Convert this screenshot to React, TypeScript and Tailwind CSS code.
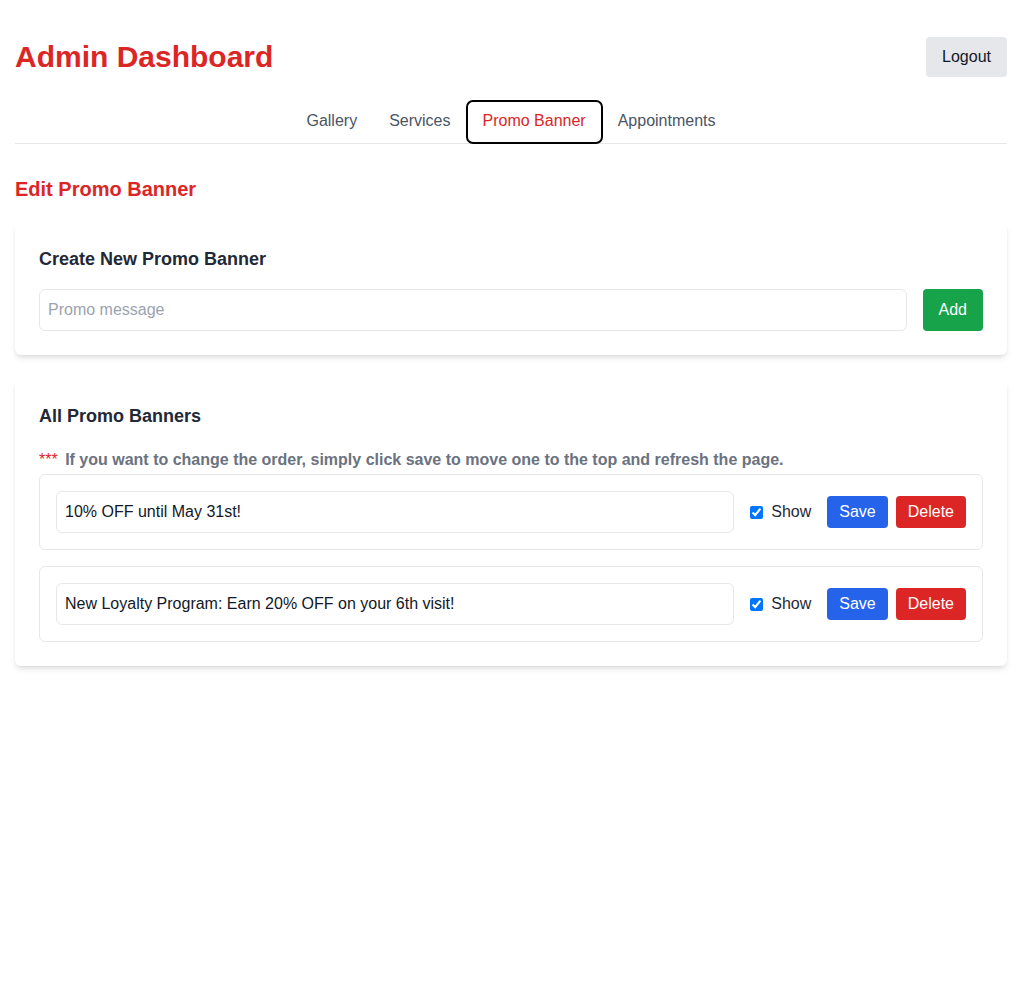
import { useState } from 'react'

// ── Data ───────────────────────────
interface PromoBanner {
    id: number
    message: string
    show: boolean
}

const INITIAL_BANNERS: PromoBanner[] = [
    { id: 1, message: '10% OFF until May 31st!', show: true },
    { id: 2, message: 'New Loyalty Program: Earn 20% OFF on your 6th visit!', show: true },
]

const TABS = ['Gallery', 'Services', 'Promo Banner', 'Appointments'] as const

// ── Banner row ───────────────────────────
function BannerRow({
    banner,
    onChange,
}: {
    banner: PromoBanner
    onChange: (b: PromoBanner) => void
}) {
    return (
        <div className="flex items-center gap-4 rounded-md border border-[#e5e7eb] p-4">
            <input
                type="text"
                value={banner.message}
                onChange={(e) => onChange({ ...banner, message: e.target.value })}
                className="h-[42px] flex-1 rounded-md border border-[#e5e7eb] px-2 text-base text-[#111827] outline-none"
            />
            <label className="flex items-center gap-2 text-base text-[#1f2937]">
                <input
                    type="checkbox"
                    checked={banner.show}
                    onChange={(e) => onChange({ ...banner, show: e.target.checked })}
                    className="m-0 h-[13px] w-[13px]"
                />
                Show
            </label>
            <div className="flex items-center gap-2">
                <button className="rounded bg-[#2563eb] px-3 py-1 text-base text-white">Save</button>
                <button className="rounded bg-[#dc2626] px-3 py-1 text-base text-white">Delete</button>
            </div>
        </div>
    )
}

export default function App() {
    const [activeTab, setActiveTab] = useState<string>('Promo Banner')
    const [banners, setBanners] = useState(INITIAL_BANNERS)
    const [draft, setDraft] = useState('')

    const updateBanner = (b: PromoBanner) =>
        setBanners((prev) => prev.map((x) => (x.id === b.id ? b : x)))

    return (
        <div className="min-h-screen bg-white px-[15px] pt-[37px] font-['Liberation_Sans',Arial,sans-serif] text-[#111827]">
            {/* Header */}
            <div className="mb-6 flex items-center justify-between">
                <h1 className="text-3xl font-bold text-[#dc2626]">Admin Dashboard</h1>
                <button className="h-10 rounded bg-[#e5e7eb] px-4 text-base text-[#111827]">Logout</button>
            </div>

            {/* Tabs */}
            <nav className="flex justify-center border-b border-[#e5e7eb]">
                {TABS.map((tab) => {
                    const active = tab === activeTab
                    return (
                        <button
                            key={tab}
                            onClick={() => setActiveTab(tab)}
                            className={
                                active
                                    ? 'h-[42px] rounded-md px-4 pb-0.5 text-base text-[#dc2626] outline-2 -outline-offset-1 outline-black'
                                    : 'h-[42px] px-4 pb-0.5 text-base text-[#4b5563]'
                            }
                        >
                            {tab}
                        </button>
                    )
                })}
            </nav>

            <h2 className="mt-[31px] mb-5 text-xl leading-7 font-bold text-[#dc2626]">Edit Promo Banner</h2>

            {/* Create card */}
            <div className="rounded-md bg-white p-6 shadow-md">
                <h3 className="mb-4.5 text-lg leading-6 font-bold text-[#1f2937]">Create New Promo Banner</h3>
                <div className="flex gap-4">
                    <input
                        type="text"
                        value={draft}
                        onChange={(e) => setDraft(e.target.value)}
                        placeholder="Promo message"
                        className="h-[42px] flex-1 rounded-md border border-[#e5e7eb] px-2 text-base outline-none placeholder:text-[#9ca3af]"
                    />
                    <button className="rounded bg-[#16a34a] px-4 text-base text-white">Add</button>
                </div>
            </div>

            {/* All banners card */}
            <div className="mt-[25px] rounded-md bg-white p-6 shadow-md">
                <h3 className="mb-5 text-lg leading-6 font-bold text-[#1f2937]">All Promo Banners</h3>
                <p className="mb-0.5 text-base leading-6 font-bold text-[#6b7280]">
                    <span className="mr-[3px] font-normal text-[#dc2626]">***</span> If you want to change the order, simply click save to move one to the top and refresh the page.
                </p>
                <div className="flex flex-col gap-4">
                    {banners.map((b) => (
                        <BannerRow key={b.id} banner={b} onChange={updateBanner} />
                    ))}
                </div>
            </div>
        </div>
    )
}
